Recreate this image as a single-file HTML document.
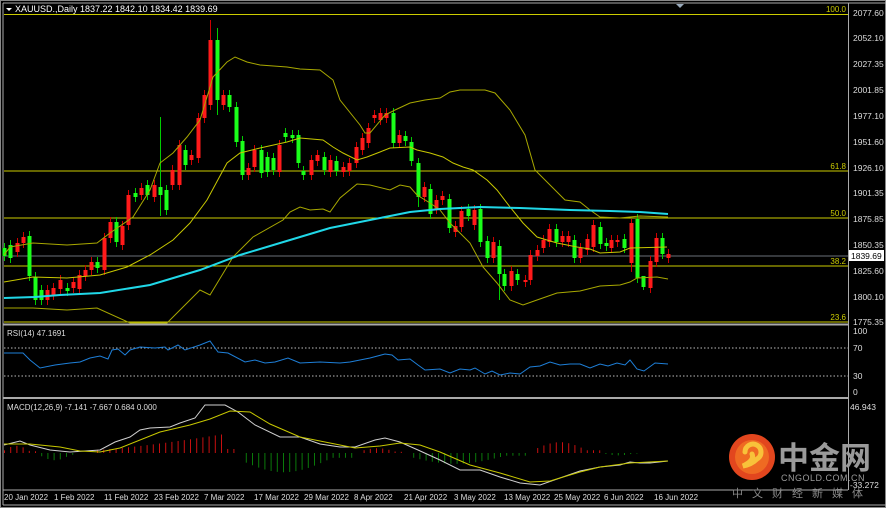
<!DOCTYPE html>
<html><head><meta charset="utf-8"><style>
html,body{margin:0;padding:0;background:#000;width:886px;height:508px;overflow:hidden}
svg{display:block}
text{font-family:"Liberation Sans","Noto Sans CJK SC",sans-serif}
</style></head><body>
<svg id="s" width="886" height="508" viewBox="0 0 886 508" xmlns="http://www.w3.org/2000/svg">
<rect width="886" height="508" fill="#000"/>
<rect x="0.5" y="0.5" width="885" height="507" fill="none" stroke="#888"/>
<line x1="3" y1="3" x2="3" y2="505" stroke="#aaa"/>
<line x1="3" y1="3" x2="886" y2="3" stroke="#aaa"/>
<line x1="848.5" y1="3" x2="848.5" y2="490" stroke="#aaa"/>
<line x1="3" y1="324.5" x2="848" y2="324.5" stroke="#aaa" stroke-width="2"/>
<line x1="3" y1="398" x2="848" y2="398" stroke="#aaa" stroke-width="2"/>
<line x1="3" y1="490" x2="848" y2="490" stroke="#aaa"/>
<line x1="3" y1="505" x2="886" y2="505" stroke="#aaa"/>
<path d="M6 8h6l-3 3z" fill="#fff"/>
<text x="15" y="12" font-size="9" fill="#fff">XAUUSD.,Daily  1837.22 1842.10 1834.42 1839.69</text>
<path d="M676 4h8l-4 4z" fill="#9ab"/>
<g stroke="#cccc00" stroke-width="1">
<line x1="4" y1="14.5" x2="848" y2="14.5"/><line x1="4" y1="171" x2="848" y2="171"/>
<line x1="4" y1="218" x2="848" y2="218"/><line x1="4" y1="266" x2="848" y2="266"/>
<line x1="4" y1="322" x2="848" y2="322"/></g>
<line x1="4" y1="256" x2="848" y2="256" stroke="#6a7078"/>
<g font-size="8" fill="#cccc00" text-anchor="end">
<text x="846" y="12">100.0</text><text x="846" y="169">61.8</text><text x="846" y="216">50.0</text>
<text x="846" y="264">38.2</text><text x="846" y="320">23.6</text></g>
<g font-size="8.5" fill="#ddd">
<text x="853" y="16">2077.60</text><text x="853" y="41">2052.10</text><text x="853" y="67">2027.35</text>
<text x="853" y="93">2001.85</text><text x="853" y="119">1977.10</text><text x="853" y="145">1951.60</text>
<text x="853" y="171">1926.10</text><text x="853" y="196">1901.35</text><text x="853" y="222">1875.85</text>
<text x="853" y="248">1850.35</text><text x="853" y="274">1825.60</text><text x="853" y="300">1800.10</text>
<text x="853" y="325">1775.35</text>
<text x="853" y="334">100</text><text x="853" y="351">70</text><text x="853" y="379">30</text><text x="853" y="395">0</text>
<text x="850" y="410">46.943</text><text x="850" y="488">-33.272</text>
</g>
<rect x="849" y="250" width="35" height="11" fill="#fff"/>
<text x="851" y="259" font-size="8.5" fill="#000">1839.69</text>
<g id="c"></g>
<polyline fill="none" stroke="#c8c800" points="4,282 33,277 67,278 100,275 127,267 150,255 173,240 190,223 207,200 227,163 240,153 260,148 287,142 300,138 323,140 333,147 343,153 357,160 367,157 380,152 390,148 410,147 417,150 430,153 443,157 453,163 463,167 473,170 487,180 497,190 510,207 523,223 537,237 557,243 577,247 590,249 600,253 620,252 630,248 667,247"/>
<polyline fill="none" stroke="#a8a800" points="4,255 10,247 33,243 67,245 97,243 110,233 133,217 150,190 160,163 173,153 187,137 200,120 207,97 213,77 227,62 235,57 247,62 260,65 287,67 300,69 320,70 333,80 340,100 360,125 365,133 370,133 385,115 395,110 410,103 425,100 440,98 450,92 460,90 485,90 495,93 510,110 525,135 535,170 550,185 565,200 580,202 590,210 600,217 620,218 640,216 668,217"/>
<polyline fill="none" stroke="#a8a800" points="4,308 33,308 67,310 97,308 130,323 167,323 200,290 210,295 233,257 253,237 283,220 290,212 300,207 310,210 323,209 330,212 340,198 357,184 370,185 390,190 400,185 410,187 417,195 430,203 440,210 450,223 470,243 483,267 497,283 510,300 523,305 537,300 557,293 580,291 600,286 620,285 630,282 637,278 657,277 668,279"/>
<polyline fill="none" stroke="#20d8e8" stroke-width="2" points="4,298 35,297 60,295 100,293 150,285 200,270 240,255 290,240 330,228 370,220 410,212 440,209 480,207 520,208 570,210 610,211 640,212 668,214"/>
<text x="7" y="336" font-size="8" fill="#ddd">RSI(14) 47.1691</text>
<g stroke="#bbb" stroke-dasharray="1.5,2"><line x1="4" y1="348" x2="848" y2="348"/><line x1="4" y1="376" x2="848" y2="376"/></g>
<polyline fill="none" stroke="#1e7fd8" points="4,353 23,353 30,360 40,368 55,365 70,363 80,362 90,358 100,356 108,359 112,350 118,349 125,355 130,350 140,347 155,348 165,347 168,350 178,345 185,350 200,345 210,341 218,352 228,353 245,362 255,360 265,363 275,362 288,358 300,363 320,362 340,363 350,362 370,358 385,354 392,355 398,360 410,359 418,365 425,370 440,369 450,373 460,369 470,370 475,368 485,374 492,371 500,375 510,373 520,374 530,367 540,366 550,362 560,365 570,364 580,364 590,368 600,364 608,366 617,363 625,365 630,360 637,369 644,371 655,363 668,364"/>
<text x="7" y="410" font-size="8" fill="#ddd">MACD(12,26,9) -7.141 -7.667 0.684 0.000</text>
<g id="h"></g>
<polyline fill="none" stroke="#d0d0d0" points="4,445 20,441 30,445 50,450 70,452 100,450 115,442 130,437 140,430 150,428 170,427 180,423 195,418 205,405 215,405 225,405 238,412 255,425 280,437 300,437 320,444 340,447 355,447 375,440 385,438 400,442 418,450 440,460 460,470 480,470 500,477 520,483 540,485 560,478 580,471 600,467 620,465 630,462 640,463 650,463 668,461"/>
<polyline fill="none" stroke="#c8c800" points="4,444 30,444 60,447 80,451 100,452 120,448 160,432 190,425 210,419 230,411 250,412 270,424 300,437 340,445 355,448 380,446 400,443 420,445 440,452 470,465 500,473 530,482 550,481 580,472 600,467 630,463 668,461"/>
<circle cx="752" cy="457" r="23" fill="#e2461e"/>
<circle cx="752" cy="457" r="17" fill="#ef6a22"/>
<path d="M745 452a8 8 0 1 1 12 7c-3 3-8 6-14 7 8-4 11-8 9-12" fill="none" stroke="#f8c23a" stroke-width="5" stroke-linecap="round"/>
<text x="778" y="469" font-size="31" font-weight="bold" fill="#9a9a9a" font-family="Noto Sans CJK SC,sans-serif">中金网</text>
<text x="781" y="481" font-size="9" fill="#9a9a9a" letter-spacing="0.5">CNGOLD.COM.CN</text>
<text x="732" y="497" font-size="11" fill="#8a8a8a" letter-spacing="9">中文财经新媒体</text>
<g font-size="8" fill="#ddd">
<text x="4" y="500">20 Jan 2022</text><text x="54" y="500">1 Feb 2022</text><text x="104" y="500">11 Feb 2022</text>
<text x="154" y="500">23 Feb 2022</text><text x="204" y="500">7 Mar 2022</text><text x="254" y="500">17 Mar 2022</text>
<text x="304" y="500">29 Mar 2022</text><text x="354" y="500">8 Apr 2022</text><text x="404" y="500">21 Apr 2022</text>
<text x="454" y="500">3 May 2022</text><text x="504" y="500">13 May 2022</text><text x="554" y="500">25 May 2022</text>
<text x="604" y="500">6 Jun 2022</text><text x="654" y="500">16 Jun 2022</text></g>
</svg>
<script>
var C=[[4,248,256,'g'],[10,245,258,'g'],[17,243,252,'r'],[23,237,243,'r'],[29,236,276,'g'],[35,277,300,'g'],[41,290,300,'g'],[47,290,300,'r'],[53,288,295,'r'],[60,280,289,'r'],[67,288,291,'g'],[73,282,288,'r'],[79,275,289,'r'],[85,270,276,'r'],[91,262,270,'r'],[97,262,268,'g'],[104,238,270,'r'],[110,222,238,'r'],[116,222,242,'g'],[122,226,245,'r'],[128,195,225,'r'],[135,193,197,'g'],[141,188,195,'r'],[147,185,195,'g'],[154,185,197,'r'],[160,187,195,'g'],[166,190,210,'g'],[172,170,185,'r'],[179,145,185,'r'],[185,150,165,'g'],[191,155,160,'r'],[198,118,158,'r'],[204,95,118,'r'],[210,40,105,'r'],[217,40,100,'g'],[223,95,105,'r'],[229,95,107,'g'],[236,107,142,'g'],[242,141,175,'g'],[248,168,175,'r'],[254,150,167,'r'],[261,150,173,'g'],[267,157,172,'g'],[273,158,170,'g'],[279,145,172,'r'],[285,133,137,'g'],[292,135,138,'g'],[298,135,163,'g'],[303,171,175,'g'],[311,160,175,'r'],[317,155,161,'r'],[324,157,170,'g'],[330,160,172,'r'],[336,161,171,'g'],[343,167,172,'r'],[349,163,171,'r'],[356,147,163,'r'],[362,138,150,'r'],[368,128,143,'r'],[374,115,118,'r'],[380,113,120,'r'],[386,113,118,'r'],[393,113,143,'g'],[399,135,143,'r'],[405,136,141,'g'],[411,142,161,'g'],[418,163,197,'g'],[424,187,197,'r'],[430,189,214,'g'],[436,200,209,'r'],[442,196,200,'r'],[449,199,228,'g'],[455,226,232,'r'],[461,211,227,'r'],[468,209,216,'g'],[474,210,225,'r'],[480,209,242,'g'],[487,241,258,'g'],[493,242,258,'r'],[499,246,274,'g'],[504,274,286,'g'],[511,271,286,'r'],[517,274,280,'g'],[525,280,282,'r'],[530,255,280,'r'],[537,250,256,'r'],[543,240,248,'r'],[549,229,242,'r'],[556,229,242,'g'],[562,236,242,'r'],[568,236,242,'r'],[574,240,258,'g'],[580,248,258,'r'],[587,239,250,'r'],[593,225,247,'r'],[600,227,244,'g'],[606,243,246,'g'],[611,240,248,'r'],[617,240,242,'r'],[624,239,248,'g'],[631,223,263,'r'],[637,219,278,'g'],[643,276,287,'g'],[650,261,288,'r'],[656,238,262,'r'],[662,238,254,'g'],[668,254,258,'r']];
var L={210:[20,110],217:[28,115],160:[117,216],631:[219,272],643:[276,290],499:[240,300],418:[158,207]};
var s='';
C.forEach(function(c){var col=c[3]=='r'?'#ff1a1a':'#1aff1a',wc=c[3]=='r'?'#c00':'#0c0';var w=L[c[0]]||[c[1]-5,c[2]+5];
s+='<line x1="'+(c[0]+.5)+'" y1="'+w[0]+'" x2="'+(c[0]+.5)+'" y2="'+w[1]+'" stroke="'+wc+'"/>';
s+='<rect x="'+(c[0]-1.5)+'" y="'+c[1]+'" width="4" height="'+Math.max(1,c[2]-c[1])+'" fill="'+col+'"/>';});
document.getElementById('c').innerHTML=s;
function hv(x){var segs=[[4,36,-6],[40,78,6],[95,236,-12],[240,356,16],[360,405,-4],[410,530,9],[535,600,-9],[605,640,2]];
for(var i=0;i<segs.length;i++){var g=segs[i];if(x>=g[0]&&x<=g[1]){var t=(x-g[0])/(g[1]-g[0]);var k=Math.sin(Math.PI*Math.min(1,t*1.2+.05));var v=g[2]*(0.3+0.9*k);if(g[0]==95)v=(t>0.93?-4:-18*Math.pow(t,1.3)-3);return v;}}return 0;}
var h='';for(var x=4;x<=668;x+=6.2){var v=hv(x);if(Math.abs(v)<.5)continue;var y0=453;h+='<line x1="'+(x+.5)+'" y1="'+y0+'" x2="'+(x+.5)+'" y2="'+(y0+v)+'" stroke="'+(v<0?'#c81010':'#0a7a0a')+'"/>';}
document.getElementById('h').innerHTML=h;
</script>
</body></html>
